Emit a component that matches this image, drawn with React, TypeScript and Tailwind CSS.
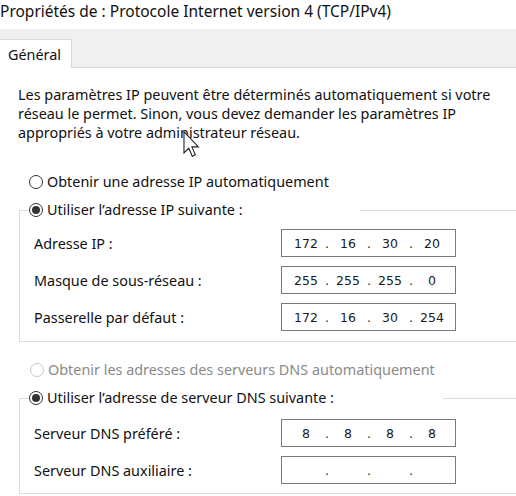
import { Fragment } from 'react';

// bouton radio façon Windows 10
function Radio({ checked = false, disabled = false }: { checked?: boolean; disabled?: boolean }) {
  return (
    <span
      className={`flex h-[14px] w-[14px] shrink-0 items-center justify-center rounded-full border bg-white ${
        disabled ? 'border-[#c8c8c8]' : 'border-[#333333]'
      }`}
    >
      {checked && <span className="h-[8px] w-[8px] rounded-full bg-[#333333]" />}
    </span>
  );
}

// champ d'adresse IP en 4 octets
function IpBox({ parts }: { parts: string[] }) {
  return (
    <div className="flex h-[28px] w-[175px] items-center border border-[#7a7a7a] bg-white pl-[7px] font-['DejaVu_Sans',sans-serif] text-[12.5px] text-[#1a1a1a]">
      {parts.map((p, i) => (
        <Fragment key={i}>
          <span className="w-[34px] text-center">{p}</span>
          {i < 3 && <span className="w-[8px] text-center">.</span>}
        </Fragment>
      ))}
    </div>
  );
}

function Row({ label, parts, className = '' }: { label: string; parts: string[]; className?: string }) {
  return (
    <div className={`flex items-center pl-[14px] ${className}`}>
      <span className="w-[247px]">{label}</span>
      <IpBox parts={parts} />
    </div>
  );
}

function RadioLine({ label, checked, disabled }: { label: string; checked?: boolean; disabled?: boolean }) {
  return (
    <div className="flex h-[19px] items-center">
      <Radio checked={checked} disabled={disabled} />
      <span className={`ml-[4px] whitespace-nowrap ${disabled ? 'text-[#8a8a8a]' : ''}`}>{label}</span>
    </div>
  );
}

export default function App() {
  return (
    <div className="relative h-[496px] w-[516px] overflow-hidden bg-white font-['Noto_Sans',sans-serif] text-[14.4px] leading-[19px] text-[#111111]">
      {/* titre */}
      <div className="h-[29px] whitespace-nowrap pt-[2px] text-[15.5px]">Propriétés de : Protocole Internet version 4 (TCP/IPv4)</div>

      {/* onglets */}
      <div className="flex h-[39px] items-end border-b border-[#d9d9d9] bg-[#f0f0f0]">
        <div className="-mb-px flex h-[29px] w-[72px] items-center border-r border-t border-[#d9d9d9] bg-white pl-[8px]">
          Général
        </div>
      </div>

      {/* texte d'intro */}
      <p className="whitespace-nowrap pl-[18px] pt-[17px]">
        Les paramètres IP peuvent être déterminés automatiquement si votre
        <br />
        réseau le permet. Sinon, vous devez demander les paramètres IP
        <br />
        appropriés à votre administrateur réseau.
      </p>

      <div className="mt-[30px] pl-[29px]">
        <RadioLine label="Obtenir une adresse IP automatiquement" />
      </div>

      {/* groupe IP */}
      <div className="ml-[19px] mt-[19px] border-b border-l border-t border-[#dcdcdc] pb-[10px]">
        <div className="-mt-[11px] ml-[9px] w-[331px] bg-white">
          <RadioLine label="Utiliser l’adresse IP suivante :" checked />
        </div>
        <Row className="mt-[10px]" label="Adresse IP :" parts={['172', '16', '30', '20']} />
        <Row className="mt-[9px]" label="Masque de sous-réseau :" parts={['255', '255', '255', '0']} />
        <Row className="mt-[9px]" label="Passerelle par défaut :" parts={['172', '16', '30', '254']} />
      </div>

      <div className="mt-[18px] pl-[30px]">
        <RadioLine label="Obtenir les adresses des serveurs DNS automatiquement" disabled />
      </div>

      {/* groupe DNS */}
      <div className="ml-[19px] mt-[19px] border-b border-l border-t border-[#dcdcdc] pb-[9px]">
        <div className="-mt-[11px] ml-[9px] w-[414px] bg-white">
          <RadioLine label="Utiliser l’adresse de serveur DNS suivante :" checked />
        </div>
        <Row className="mt-[12px]" label="Serveur DNS préféré :" parts={['8', '8', '8', '8']} />
        <Row className="mt-[9px]" label="Serveur DNS auxiliaire :" parts={['', '', '', '']} />
      </div>

      {/* curseur souris */}
      <svg className="absolute left-[183px] top-[131px]" width="17" height="26" viewBox="0 0 12 19">
        <path d="M0.5 0.5 L0.5 16 L4 12.6 L6.6 18.4 L8.8 17.4 L6.3 11.6 L11 11.6 Z" fill="white" stroke="#222" strokeWidth="0.8" strokeLinejoin="miter" />
      </svg>
    </div>
  );
}
